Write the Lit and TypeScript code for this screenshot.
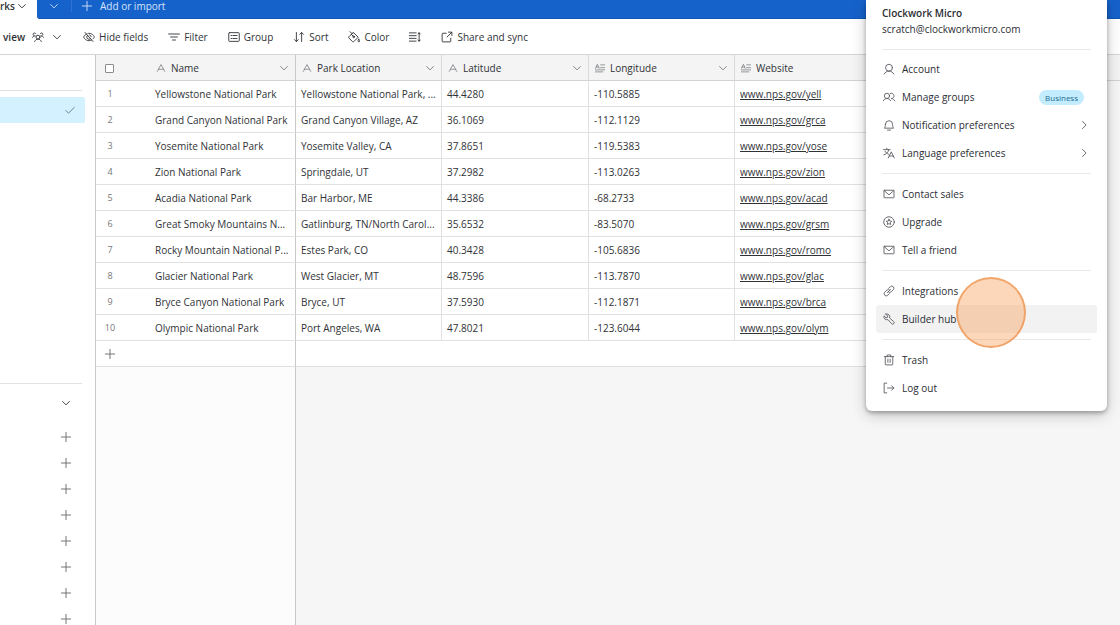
import { LitElement, html, svg, css, nothing, type TemplateResult } from "lit";
import { customElement } from "lit/decorators.js";
import { classMap } from "lit/directives/class-map.js";

const ICONS: Record<string, TemplateResult> = {
  chevron: svg`<path d="M3.500 6 8 10.500 12.500 6"/>`,
  right: svg`<path d="M6 3.200 10.800 8 6 12.800"/>`,
  plus: svg`<path d="M8 1.800v12.400M1.800 8h12.400"/>`,
  check: svg`<path d="M2.500 8.700 6 12.200 13.800 4.500"/>`,
  people: svg`<circle cx="8" cy="8.200" r="2.600"/><path d="M3.600 14c.8-2 2.400-3.200 4.400-3.200s3.600 1.200 4.400 3.200M11.600 6.600c2 0 3.200.8 4 2M4.400 6.600c-2 0-3.200.8-4 2M11 3.600a1.900 1.900 0 1 1 2.200 2.700M5 3.600a1.900 1.900 0 1 0-2.200 2.700"/>`,
  hide: svg`<path d="M2.800 2l10.400 12M10.200 10.200a3 3 0 0 1-4.300-4.300M4.500 4.200C1.800 5.600.7 8 .7 8s2.100 4.900 7.300 4.900c1.300 0 2.500-.3 3.500-.9M13.300 10.600C14.700 9.300 15.300 8 15.300 8S13.200 3.100 8 3.100c-.5 0-.9 0-1.400.1M8.600 5.100a3 3 0 0 1 2.400 2.600"/>`,
  filter: svg`<path d="M.8 4h14.400M3.500 8h9M6 12h4"/>`,
  group: svg`<rect x="1" y="2.200" width="14" height="11.600" rx="1"/><path d="M6.500 6H12M6.500 10H12M4 6h.8M4 10h.8"/>`,
  sort: svg`<path d="M4.500 2v12M2 11.500 4.500 14 7 11.500M11.500 14V2M9 4.500 11.500 2 14 4.500"/>`,
  color: svg`<path d="M2.600.8 5.400 3.600M6.400 2.500 1.200 7.700a1.100 1.100 0 0 0 0 1.600l4.900 4.900a1.100 1.100 0 0 0 1.600 0l5.900-5.900L7.900 2.600a1.100 1.100 0 0 0-1.500 0zM4.500 4.400 7 7"/><circle cx="7.600" cy="7.700" r="1.200"/><path d="M14.400 11s1.100 1.500 1.100 2.300a1.100 1.100 0 0 1-2.200 0c0-.8 1.100-2.300 1.100-2.300z"/>`,
  height: svg`<path d="M.5 2.500h9M.5 6.200h9M.5 9.800h9M.5 13.500h9M13.500 2.500v11M12 4l1.500-1.700L15 4M12 12l1.500 1.700L15 12"/>`,
  share: svg`<path d="M7 3H2.500a1 1 0 0 0-1 1v9.500a1 1 0 0 0 1 1H12a1 1 0 0 0 1-1V9.500M10 1.500h4.500V6M8 8l6.300-6.300"/>`,
  text: svg`<path d="M2 13.500 8 2.500l6 11M4 10h8"/>`,
  longtext: svg`<path d="M.8 8.500 3.800 2l3 6.500M1.800 6.500h4M9 3h6.500M9 7.500h6.500M.5 11h15M.5 14.200h12"/>`,
  user: svg`<circle cx="8" cy="6.300" r="4.600"/><path d="M1.600 14.600c1.200-2.300 3.500-3.700 6.400-3.700s5.200 1.400 6.400 3.700"/>`,
  users: svg`<circle cx="5.300" cy="6.500" r="3.500"/><path d="M.4 13c1-1.800 2.700-3 4.900-3s3.900 1.200 4.900 3M9.800 3.300a3.500 3.500 0 1 1 1 6.700c2.200 0 3.800 1.200 4.800 3"/>`,
  bell: svg`<path d="M3.300 7a4.700 4.700 0 0 1 9.400 0c0 3 .8 4.300 1.500 5.200H1.800C2.500 11.300 3.300 10 3.300 7zM6 14.800h4"/>`,
  language: svg`<path d="M7 14.500 11 6.500l4 8M8.300 12h5.400M.7 3.500h8.800M5 1.700v1.800M7.600 3.500c0 3-3 6.200-6.400 7M2.800 5.700C3.600 7.600 5.500 9 7.500 9.600"/>`,
  mail: svg`<rect x="1.300" y="3" width="13.400" height="10" rx=".6"/><path d="M1.500 3.400 8 9.200l6.500-5.800"/>`,
  star: svg`<circle cx="8" cy="8" r="7"/><path d="m8 4.300 1.100 2.400 2.600.3-1.900 1.800.5 2.600L8 10.100l-2.300 1.300.5-2.600L4.300 7l2.600-.3z"/>`,
  link: svg`<path d="m6 10 4-4M7.400 4.500l2.200-2.200a2.900 2.900 0 0 1 4.100 4.100l-2.800 2.700a2.900 2.900 0 0 1-4 0M8.600 11.500l-2.200 2.200a2.900 2.900 0 0 1-4.100-4.100l2.800-2.700a2.900 2.900 0 0 1 4 0"/>`,
  wrench: svg`<path d="M3.800 1.400 6.300 4l-.4 1.900L4 6.300 1.400 3.800a4 4 0 0 0 5.200 5l4.900 5.500a1.900 1.900 0 0 0 2.800-2.800L8.800 6.600a4 4 0 0 0-5-5.200z"/>`,
  trash: svg`<path d="M1.800 3.500h12.400M3 3.500v10.300c0 .4.300.7.700.7h8.600c.4 0 .7-.3.700-.7V3.500M5.500 3.500V1.300h5v2.200M6.500 6.800v4.400M9.500 6.800v4.400"/>`,
  logout: svg`<path d="M5 1.500H1.500v13H5M6 8h8.500M11.500 5l3 3-3 3"/>`,
};

const icon = (name: string) =>
  html`<svg class="icon" viewBox="0 0 16 16" aria-hidden="true">${ICONS[name]}</svg>`;

const iconStyles = css`
  .icon {
    display: block;
    flex: none;
    width: 12px;
    height: 12px;
    fill: none;
    stroke: currentColor;
    stroke-width: 1.2;
    stroke-linecap: round;
    stroke-linejoin: round;
  }
  button {
    font: inherit;
    color: inherit;
    background: none;
    border: 0;
    padding: 0;
    margin: 0;
    cursor: pointer;
  }
`;

interface MenuItem {
  icon: string;
  label: string;
  badge?: string;
  submenu?: boolean;
  active?: boolean;
}

const MENU: MenuItem[][] = [
  [
    { icon: "user", label: "Account" },
    { icon: "users", label: "Manage groups", badge: "Business" },
    { icon: "bell", label: "Notification preferences", submenu: true },
    { icon: "language", label: "Language preferences", submenu: true },
  ],
  [
    { icon: "mail", label: "Contact sales" },
    { icon: "star", label: "Upgrade" },
    { icon: "mail", label: "Tell a friend" },
  ],
  [
    { icon: "link", label: "Integrations" },
    { icon: "wrench", label: "Builder hub", active: true },
  ],
  [
    { icon: "trash", label: "Trash" },
    { icon: "logout", label: "Log out" },
  ],
];

@customElement("account-menu")
export class AccountMenu extends LitElement {
  static styles = [
    iconStyles,
    css`
      :host {
        display: block;
        box-sizing: border-box;
        width: 241px;
        padding: 5px 10px 9px;
        background: #fff;
        border-radius: 0 0 6px 6px;
        box-shadow: 0 2px 4px rgba(0, 0, 0, 0.3), 0 4px 16px rgba(0, 0, 0, 0.2);
        color: #2b2d33;
      }
      .who {
        padding: 0 6px;
        line-height: 16px;
      }
      .name {
        font-weight: 600;
      }
      .group {
        list-style: none;
        margin: 0;
        padding: 0;
      }
      .group::before {
        content: "";
        display: block;
        height: 1px;
        margin: 6px;
        background: #e9e9e9;
      }
      .who + .group::before {
        margin-top: 12px;
        margin-bottom: 5px;
      }
      .row {
        position: relative;
      }
      .item {
        display: flex;
        align-items: center;
        gap: 7px;
        width: 100%;
        height: 28px;
        padding: 0 7px;
        border-radius: 3px;
        text-align: left;
      }
      .item .icon {
        color: #5c5e64;
      }
      .active {
        background: #f2f2f2;
      }
      .label {
        flex: 1;
      }
      .badge {
        padding: 0 6px;
        margin-right: 6px;
        border-radius: 8px;
        background: #c4ecff;
        color: #1b6c92;
        font-size: 8px;
        line-height: 15px;
      }
      .click {
        position: absolute;
        left: 80px;
        top: -28px;
        z-index: 1;
        box-sizing: border-box;
        width: 70px;
        height: 71px;
        border: 2px solid rgba(238, 148, 82, 0.75);
        border-radius: 50%;
        background: rgba(247, 160, 88, 0.42);
        pointer-events: none;
      }
    `,
  ];

  render() {
    return html`
      <div class="who">
        <div class="name">Clockwork Micro</div>
        <div>scratch@clockworkmicro.com</div>
      </div>
      ${MENU.map(
        (group) => html`<ul class="group">
          ${group.map(
            (item) => html`<li class="row">
              <button class=${classMap({ item: true, active: !!item.active })}>
                ${icon(item.icon)}
                <span class="label">${item.label}</span>
                ${item.badge ? html`<span class="badge">${item.badge}</span>` : nothing}
                ${item.submenu ? icon("right") : nothing}
              </button>
              ${item.active ? html`<span class="click"></span>` : nothing}
            </li>`
          )}
        </ul>`
      )}
    `;
  }
}

const COLUMNS = [
  { label: "Name", icon: "text", cls: "c-name", menu: true },
  { label: "Park Location", icon: "text", cls: "c-a", menu: true },
  { label: "Latitude", icon: "text", cls: "c-b", menu: true },
  { label: "Longitude", icon: "longtext", cls: "c-a", menu: true },
  { label: "Website", icon: "longtext", cls: "c-a", menu: false },
];

const PARKS = [
  ["Yellowstone National Park", "Yellowstone National Park, ...", "44.4280", "-110.5885", "www.nps.gov/yell"],
  ["Grand Canyon National Park", "Grand Canyon Village, AZ", "36.1069", "-112.1129", "www.nps.gov/grca"],
  ["Yosemite National Park", "Yosemite Valley, CA", "37.8651", "-119.5383", "www.nps.gov/yose"],
  ["Zion National Park", "Springdale, UT", "37.2982", "-113.0263", "www.nps.gov/zion"],
  ["Acadia National Park", "Bar Harbor, ME", "44.3386", "-68.2733", "www.nps.gov/acad"],
  ["Great Smoky Mountains N...", "Gatlinburg, TN/North Carol...", "35.6532", "-83.5070", "www.nps.gov/grsm"],
  ["Rocky Mountain National P...", "Estes Park, CO", "40.3428", "-105.6836", "www.nps.gov/romo"],
  ["Glacier National Park", "West Glacier, MT", "48.7596", "-113.7870", "www.nps.gov/glac"],
  ["Bryce Canyon National Park", "Bryce, UT", "37.5930", "-112.1871", "www.nps.gov/brca"],
  ["Olympic National Park", "Port Angeles, WA", "47.8021", "-123.6044", "www.nps.gov/olym"],
];

@customElement("park-grid")
export class ParkGrid extends LitElement {
  static styles = [
    iconStyles,
    css`
      :host {
        display: flex;
        flex-direction: column;
        min-width: 0;
        overflow: hidden;
        background: #f6f6f6;
      }
      .table {
        width: 100%;
        table-layout: fixed;
        border-collapse: separate;
        border-spacing: 0;
      }
      .c-num {
        width: 54px;
      }
      .c-name,
      .c-a {
        width: 146px;
      }
      .c-b {
        width: 147px;
      }
      th,
      td {
        box-sizing: border-box;
        height: 26px;
        padding: 1px 5px 0;
        border-bottom: 1px solid #e1e1e1;
        border-right: 1px solid #e1e1e1;
        font-weight: 400;
        text-align: left;
        white-space: nowrap;
        overflow: hidden;
        background: #fff;
      }
      th {
        background: #f4f4f4;
        border-bottom-color: #d2d2d2;
        border-right-color: #dadada;
      }
      .num,
      .none {
        border-right: 0;
      }
      td.none {
        background: none;
        border: 0;
      }
      .num {
        padding-left: 9px;
        color: #777;
        font-size: 9px;
      }
      td.num {
        padding: 0 26px 0 0;
        text-align: center;
      }
      .name {
        border-right-color: #c8c8c8;
      }
      .head {
        display: flex;
        align-items: center;
        gap: 5px;
        padding-left: 1px;
      }
      .head .icon {
        width: 10px;
        height: 10px;
        color: #76787c;
      }
      .title {
        flex: 1;
      }
      .head .arrow .icon {
        width: 12px;
        height: 12px;
      }
      .tick {
        appearance: none;
        display: block;
        box-sizing: border-box;
        width: 9px;
        height: 9px;
        margin: 0;
        border: 1px solid #8a8c90;
        border-radius: 1px;
        background: #fff;
      }
      .site {
        color: inherit;
      }
      .add {
        display: block;
        margin: 0 auto;
        color: #666;
      }
      .new {
        border-right: 0;
      }
      .rest {
        flex: 1;
        box-sizing: border-box;
        width: 200px;
        border-right: 1px solid #c8c8c8;
        background: #fcfcfc;
      }
    `,
  ];

  render() {
    return html`
      <table class="table">
        <thead>
          <tr>
            <th class="num c-num"><input class="tick" type="checkbox" aria-label="Select all" /></th>
            ${COLUMNS.map(
              (c, i) => html`<th class="${c.cls} ${i === 0 ? "name" : ""}">
                <div class="head">
                  ${icon(c.icon)}<span class="title">${c.label}</span>
                  ${c.menu
                    ? html`<button class="arrow" aria-label="Column menu">${icon("chevron")}</button>`
                    : nothing}
                </div>
              </th>`
            )}
            <th class="none"></th>
          </tr>
        </thead>
        <tbody>
          ${PARKS.map(
            (p, i) => html`<tr>
              <td class="num">${i + 1}</td>
              <td class="name">${p[0]}</td>
              <td>${p[1]}</td>
              <td>${p[2]}</td>
              <td>${p[3]}</td>
              <td><a class="site" href="#">${p[4]}</a></td>
              <td class="none"></td>
            </tr>`
          )}
          <tr>
            <td class="num"><button class="add" aria-label="Add record">${icon("plus")}</button></td>
            <td class="name"></td>
            <td class="new" colspan="4"></td>
            <td class="none"></td>
          </tr>
        </tbody>
      </table>
      <div class="rest"></div>
    `;
  }
}

const TOOLS = [
  ["hide", "Hide fields"],
  ["filter", "Filter"],
  ["group", "Group"],
  ["sort", "Sort"],
  ["color", "Color"],
  ["height", ""],
  ["share", "Share and sync"],
];

@customElement("app-root")
export class AppRoot extends LitElement {
  static styles = [
    iconStyles,
    css`
      :host {
        position: relative;
        display: flex;
        flex-direction: column;
        height: 100vh;
        overflow: hidden;
        background: #fff;
        color: #303236;
        font: 10px/14px "Open Sans", "Noto Sans", sans-serif;
      }
      .tabs {
        display: flex;
        flex: none;
        height: 19px;
        background: #fff;
      }
      .tab {
        display: flex;
        gap: 1px;
        width: 37px;
        height: 12px;
        align-items: center;
        font-weight: 600;
      }
      .bar {
        display: flex;
        flex: 1;
        box-sizing: border-box;
        align-items: flex-start;
        background: #1662cb;
        border-bottom: 1px solid #1156b4;
        border-bottom-left-radius: 3px;
        color: #d5e4fa;
      }
      .bar button {
        display: flex;
        align-items: center;
        height: 12px;
      }
      .more {
        padding: 0 11px;
        border-right: 1px solid #2f74d4;
      }
      .import {
        gap: 7px;
        padding-left: 9px;
        font-weight: 500;
      }
      .tools {
        display: flex;
        flex: none;
        align-items: center;
        gap: 20px;
        height: 35px;
        padding-left: 3px;
        border-bottom: 1px solid #d4d5d6;
      }
      .tool {
        display: flex;
        align-items: center;
        gap: 4px;
        white-space: nowrap;
      }
      .view {
        gap: 7px;
        font-weight: 600;
      }
      .body {
        display: flex;
        flex: 1;
        min-height: 0;
      }
      .side {
        flex: none;
        box-sizing: border-box;
        width: 96px;
        padding-top: 35px;
        border-right: 1px solid #c8c8c8;
        overflow: hidden;
      }
      .rule {
        height: 1px;
        margin: 0 13px 0 0;
        border: 0;
        background: #e2e2e2;
      }
      .selected {
        display: flex;
        align-items: center;
        justify-content: flex-end;
        width: 85px;
        height: 26px;
        margin: 6px 0 260px;
        padding-right: 9px;
        border-radius: 0 2px 2px 0;
        background: #d3f1fe;
        color: #5c7d90;
      }
      .create {
        display: flex;
        flex-direction: column;
        align-items: flex-end;
        padding: 6px 23px 0 0;
      }
      .create button {
        display: flex;
        align-items: center;
        height: 26px;
        color: #666;
      }
      .create .toggle {
        margin-bottom: 8px;
        color: #333;
      }
      .grid {
        flex: 1;
      }
      .menu {
        position: absolute;
        top: 0;
        right: 13px;
      }
    `,
  ];

  render() {
    return html`
      <header class="tabs">
        <button class="tab">rks ${icon("chevron")}</button>
        <div class="bar">
          <button class="more" aria-label="All tables">${icon("chevron")}</button>
          <button class="import">${icon("plus")}Add or import</button>
        </div>
      </header>
      <nav class="tools">
        <button class="tool view">view ${icon("people")} ${icon("chevron")}</button>
        ${TOOLS.map(
          ([name, label]) =>
            html`<button class="tool" aria-label=${label || "Row height"}>${icon(name)}${label}</button>`
        )}
      </nav>
      <div class="body">
        <aside class="side">
          <hr class="rule" />
          <button class="selected" aria-label="Current view">${icon("check")}</button>
          <hr class="rule" />
          <div class="create">
            <button class="toggle" aria-label="Collapse">${icon("chevron")}</button>
            ${Array.from(
              { length: 8 },
              () => html`<button aria-label="Create view">${icon("plus")}</button>`
            )}
          </div>
        </aside>
        <park-grid class="grid"></park-grid>
      </div>
      <account-menu class="menu"></account-menu>
    `;
  }
}
